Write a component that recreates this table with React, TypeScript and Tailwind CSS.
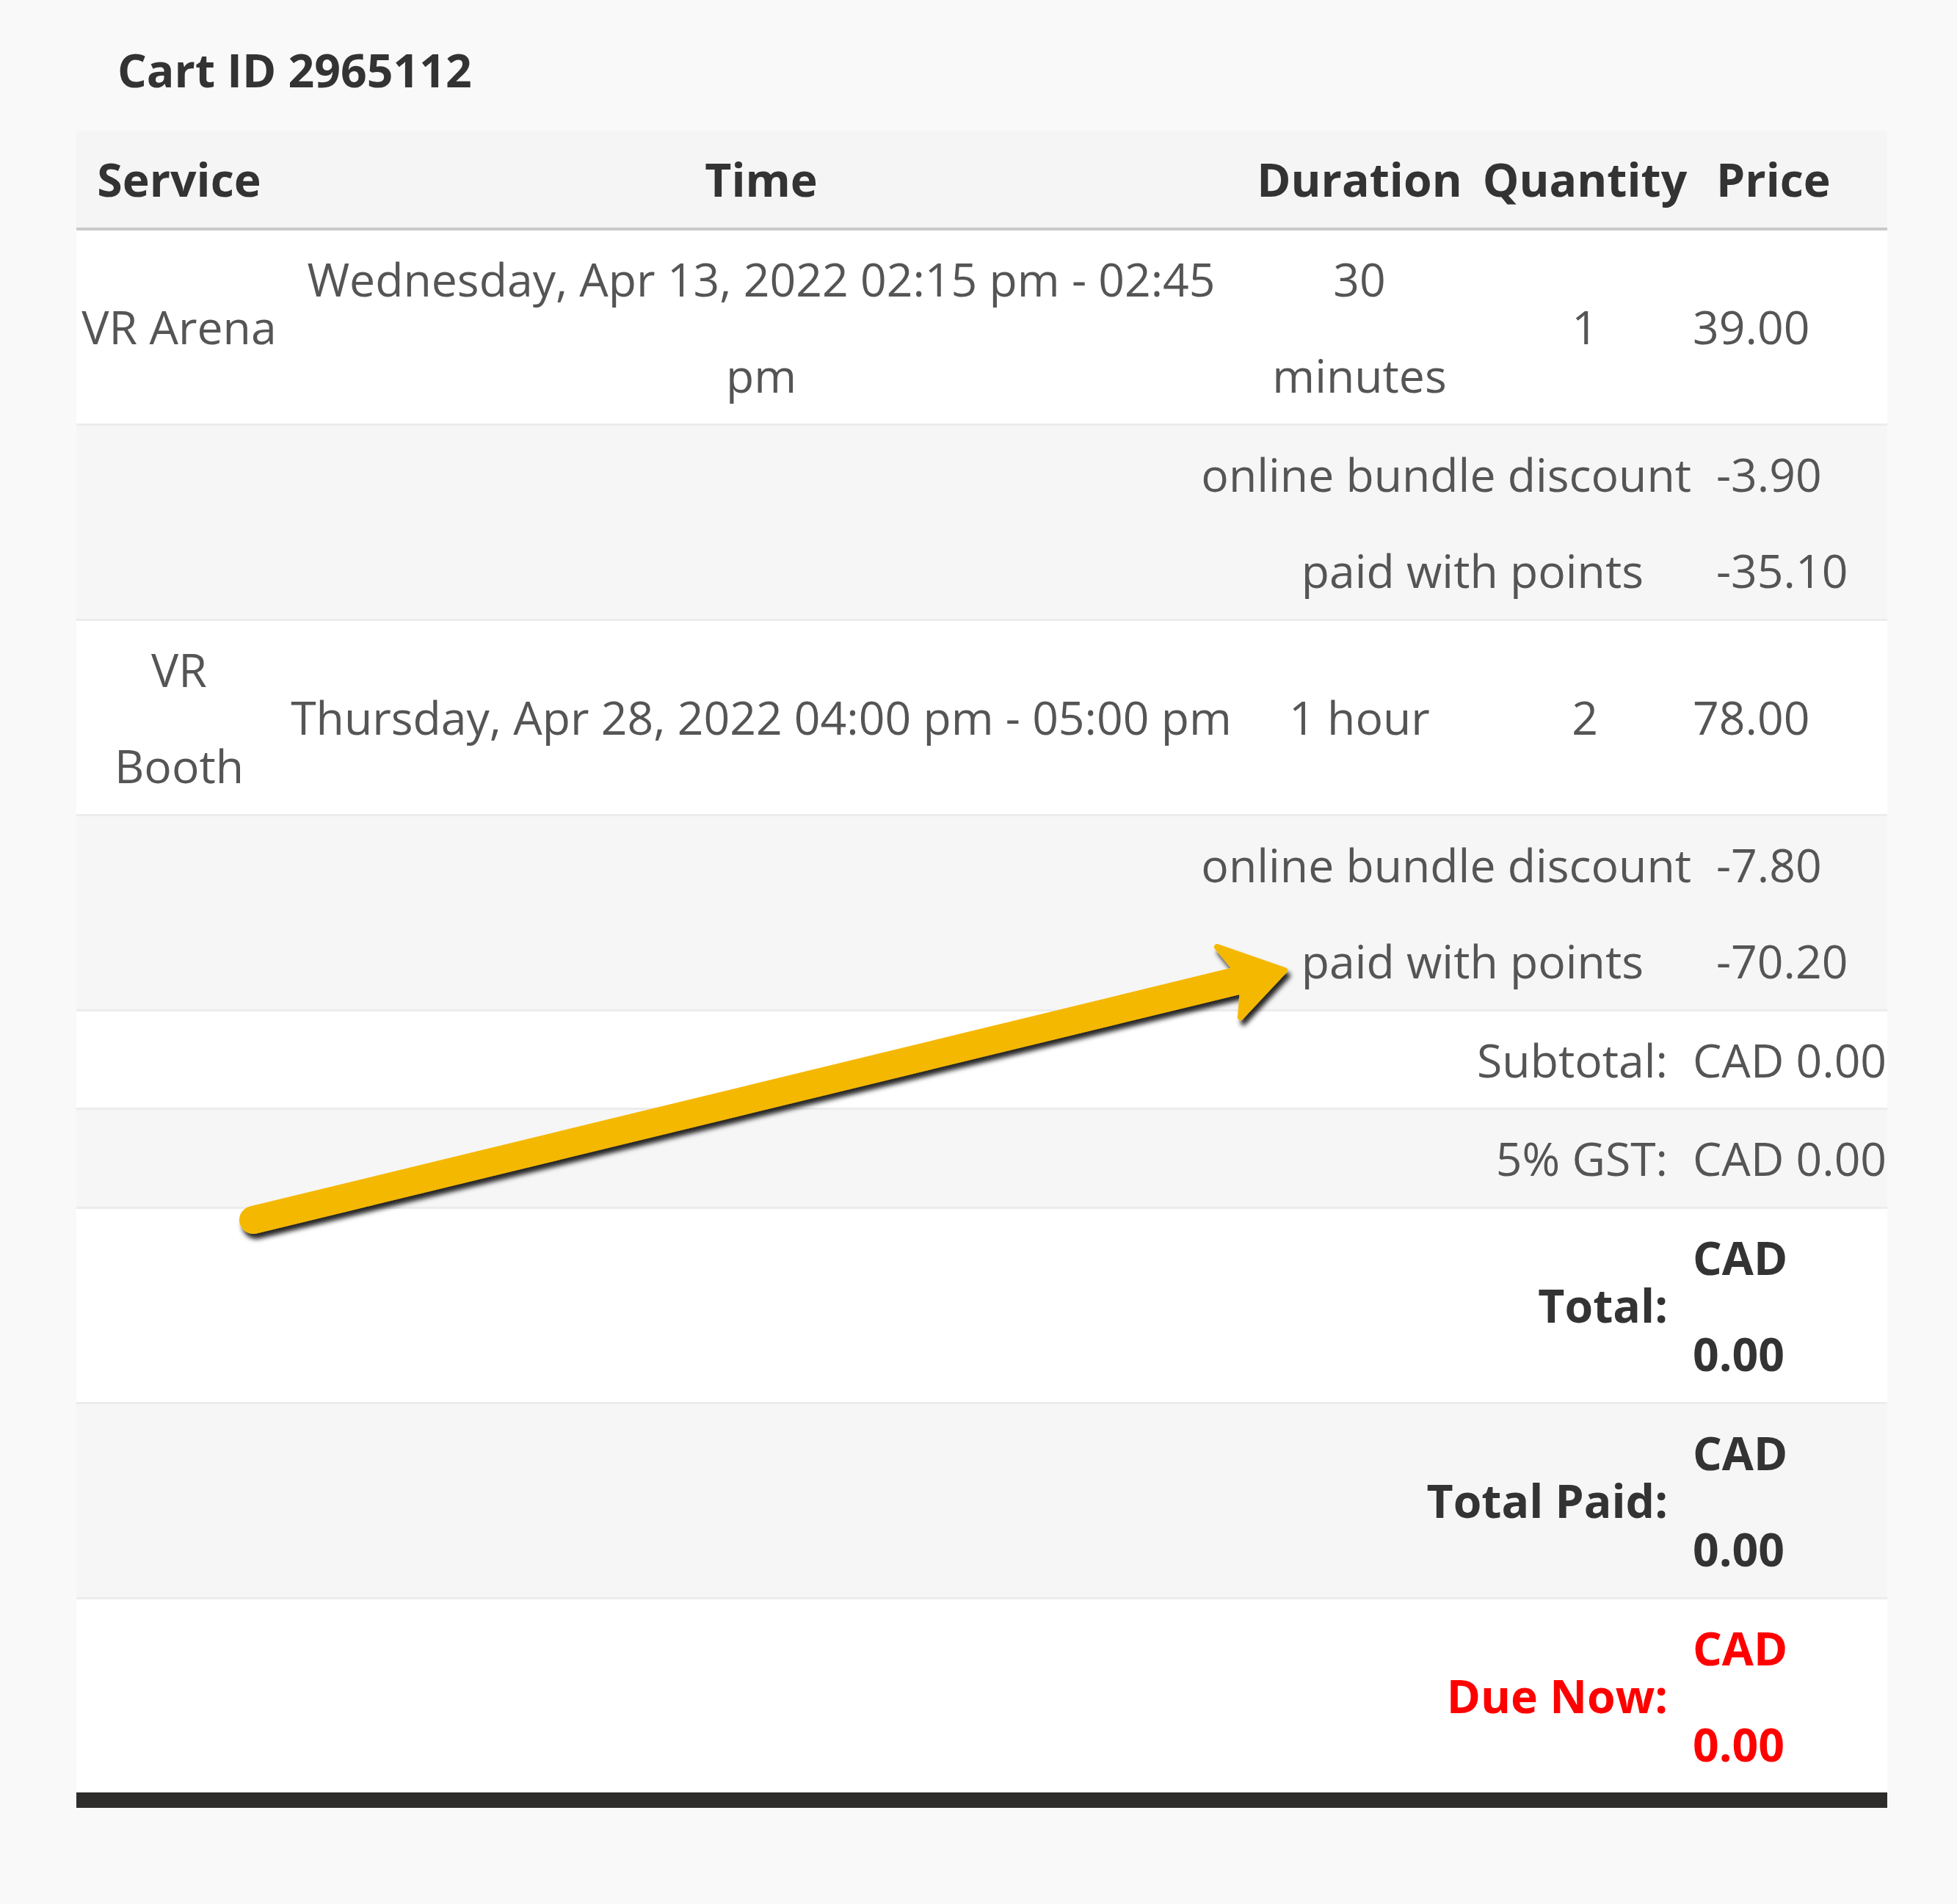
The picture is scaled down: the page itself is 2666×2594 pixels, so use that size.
import React from "react";

function Arrow() {
  return (
    <svg
      className="absolute left-0 top-0 pointer-events-none"
      width={2666}
      height={2594}
      viewBox="0 0 2666 2594"
    >
      <defs>
        <filter id="sh" x="-10%" y="-10%" width="120%" height="130%">
          <feDropShadow dx="4" dy="7" stdDeviation="3" floodColor="#000" floodOpacity="0.85" />
        </filter>
      </defs>
      <g filter="url(#sh)">
        <line x1="345" y1="1662" x2="1686" y2="1336" stroke="#f5b800" strokeWidth="38" strokeLinecap="round" />
        <polygon points="1658,1290 1750,1322 1690,1386 1694,1334" fill="#f5b800" strokeLinejoin="round" stroke="#f5b800" strokeWidth="8" />
      </g>
    </svg>
  );
}

export default function App() {
  return (
    <div className="relative w-[2666px] h-[2594px] bg-[#f9f9f9] font-['Open_Sans',sans-serif] text-[62.5px] leading-[131.5px] text-[#555] pt-[30px]">
      <div className="pl-[160px] font-bold text-[#333] leading-[130px]">Cart ID 2965112</div>
      <div className="ml-[104px] mt-[18px] w-[2467px]">
        {/* header */}
        <div className="flex bg-[#f5f5f5] border-b-[4px] border-[#cacaca] font-bold text-[#333]">
          <div className="w-[280px] text-center">Service</div>
          <div className="w-[1306px] text-center">Time</div>
          <div className="w-[324px] text-center">Duration</div>
          <div className="w-[290px] text-center">Quantity</div>
          <div className="w-[267px] pl-[34px]">Price</div>
        </div>

        {/* item 1 */}
        <div className="flex items-center bg-white border-b-[3px] border-[#ececec]">
          <div className="w-[280px] text-center whitespace-nowrap">VR Arena</div>
          <div className="w-[1306px] text-center whitespace-nowrap">
            Wednesday, Apr 13, 2022 02:15 pm - 02:45
            <br />
            pm
          </div>
          <div className="w-[324px] text-center">
            30
            <br />
            minutes
          </div>
          <div className="w-[290px] text-center">1</div>
          <div className="w-[267px] pl-[2px]">39.00</div>
        </div>

        {/* discounts 1 */}
        <div className="bg-[#f6f6f6] border-b-[3px] border-[#ececec]">
          <div className="flex">
            <div className="w-[2200px] text-right">online bundle discount</div>
            <div className="w-[267px] pl-[34px]">-3.90</div>
          </div>
          <div className="flex">
            <div className="w-[2200px] text-right pr-[65px]">paid with points</div>
            <div className="w-[267px] pl-[34px]">-35.10</div>
          </div>
        </div>

        {/* item 2 */}
        <div className="flex items-center bg-white border-b-[3px] border-[#ececec]">
          <div className="w-[280px] text-center">
            VR
            <br />
            Booth
          </div>
          <div className="w-[1306px] text-center whitespace-nowrap">Thursday, Apr 28, 2022 04:00 pm - 05:00 pm</div>
          <div className="w-[324px] text-center">1 hour</div>
          <div className="w-[290px] text-center">2</div>
          <div className="w-[267px] pl-[2px]">78.00</div>
        </div>

        {/* discounts 2 */}
        <div className="bg-[#f6f6f6] border-b-[3px] border-[#ececec]">
          <div className="flex">
            <div className="w-[2200px] text-right">online bundle discount</div>
            <div className="w-[267px] pl-[34px]">-7.80</div>
          </div>
          <div className="flex">
            <div className="w-[2200px] text-right pr-[65px]">paid with points</div>
            <div className="w-[267px] pl-[34px]">-70.20</div>
          </div>
        </div>

        {/* subtotal */}
        <div className="flex bg-white border-b-[3px] border-[#ececec]">
          <div className="w-[2200px] text-right pr-[32px]">Subtotal:</div>
          <div className="w-[267px] pl-[2px] whitespace-nowrap">CAD 0.00</div>
        </div>

        {/* gst */}
        <div className="flex bg-[#f6f6f6] border-b-[3px] border-[#ececec]">
          <div className="w-[2200px] text-right pr-[32px]">5% GST:</div>
          <div className="w-[267px] pl-[2px] whitespace-nowrap">CAD 0.00</div>
        </div>

        {/* total */}
        <div className="flex items-center bg-white border-b-[3px] border-[#ececec] font-bold text-[#333]">
          <div className="w-[2200px] text-right pr-[32px]">Total:</div>
          <div className="w-[267px] pl-[2px]">
            CAD
            <br />
            0.00
          </div>
        </div>

        {/* total paid */}
        <div className="flex items-center bg-[#f6f6f6] border-b-[3px] border-[#ececec] font-bold text-[#333]">
          <div className="w-[2200px] text-right pr-[32px]">Total Paid:</div>
          <div className="w-[267px] pl-[2px]">
            CAD
            <br />
            0.00
          </div>
        </div>

        {/* due now */}
        <div className="flex items-center bg-white border-b-[21px] border-[#2f2d2c] font-bold text-[#ff0000]">
          <div className="w-[2200px] text-right pr-[32px]">Due Now:</div>
          <div className="w-[267px] pl-[2px]">
            CAD
            <br />
            0.00
          </div>
        </div>
      </div>
      <Arrow />
    </div>
  );
}
